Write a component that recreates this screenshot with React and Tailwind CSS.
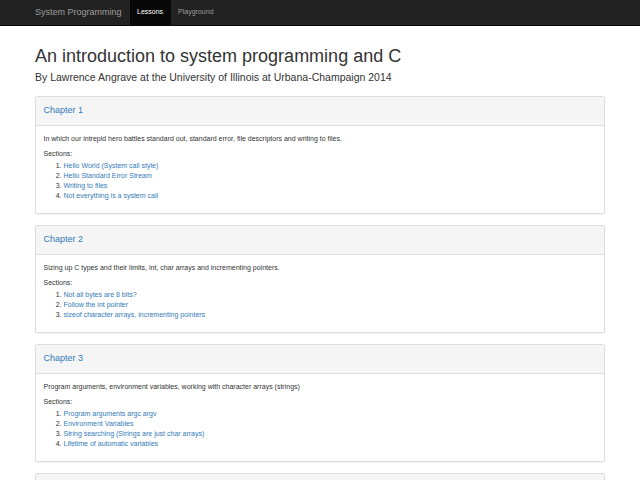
import React from 'react';

const chapters = [
  {
    title: 'Chapter 1',
    desc: 'In which our intrepid hero battles standard out, standard error, file descriptors and writing to files.',
    sections: ['Hello World (System call style)', 'Hello Standard Error Stream', 'Writing to files', 'Not everything is a system call'],
  },
  {
    title: 'Chapter 2',
    desc: 'Sizing up C types and their limits, int, char arrays and incrementing pointers.',
    sections: ['Not all bytes are 8 bits?', 'Follow the int pointer', 'sizeof character arrays, incrementing pointers'],
  },
  {
    title: 'Chapter 3',
    desc: 'Program arguments, environment variables, working with character arrays (strings)',
    sections: ['Program arguments argc argv', 'Environment Variables', 'String searching (Strings are just char arrays)', 'Lifetime of automatic variables'],
  },
];

const Panel = ({ chapter }) => (
  <div className="mb-[11px] rounded-[2px] border border-[#dddddd] bg-white shadow-[0_1px_1px_rgba(0,0,0,0.05)]">
    <div className="h-[29px] flex items-center px-[7.5px] bg-[#f5f5f5] border-b border-[#dddddd] rounded-t-[2px]">
      <a className="text-[9px] text-[#337ab7]">{chapter.title}</a>
    </div>
    <div className="px-[7.5px] py-[7.5px] text-[7px] leading-[10px] text-[#333333]">
      <p className="mb-[5px]">{chapter.desc}</p>
      <p className="mb-[2px]">Sections:</p>
      <ol className="list-decimal pl-[20px] mb-[5px]">
        {chapter.sections.map((s) => (
          <li key={s}>
            <a className="text-[#337ab7]">{s}</a>
          </li>
        ))}
      </ol>
    </div>
  </div>
);

export default function App() {
  return (
    <div className="h-[480px] overflow-hidden bg-white font-['Liberation_Sans',Arial,sans-serif]">
      <nav className="h-[26px] bg-[#222222] border-b border-[#080808]">
        <div className="w-[570px] mx-auto flex h-full items-stretch">
          <a className="flex items-center text-[9px] text-[#9d9d9d] pr-[8px]">System Programming</a>
          <a className="flex items-center px-[7.5px] bg-[#080808] text-white text-[7px]">Lessons</a>
          <a className="flex items-center px-[7.5px] text-[#9d9d9d] text-[7px]">Playground</a>
        </div>
      </nav>
      <div className="w-[570px] mx-auto">
        <h1 className="text-[18px] leading-[20px] text-[#333333] mt-[20px]">An introduction to system programming and C</h1>
        <h2 className="text-[10.5px] leading-[12px] text-[#333333] mt-[5px] mb-[13px]">By Lawrence Angrave at the University of Illinois at Urbana-Champaign 2014</h2>
        {chapters.map((c) => (
          <Panel key={c.title} chapter={c} />
        ))}
        {/* next panel, only its top edge is in view */}
        <div className="rounded-[2px] border border-[#dddddd] bg-white">
          <div className="h-[29px] bg-[#f5f5f5] border-b border-[#dddddd] rounded-t-[2px]" />
        </div>
      </div>
    </div>
  );
}
